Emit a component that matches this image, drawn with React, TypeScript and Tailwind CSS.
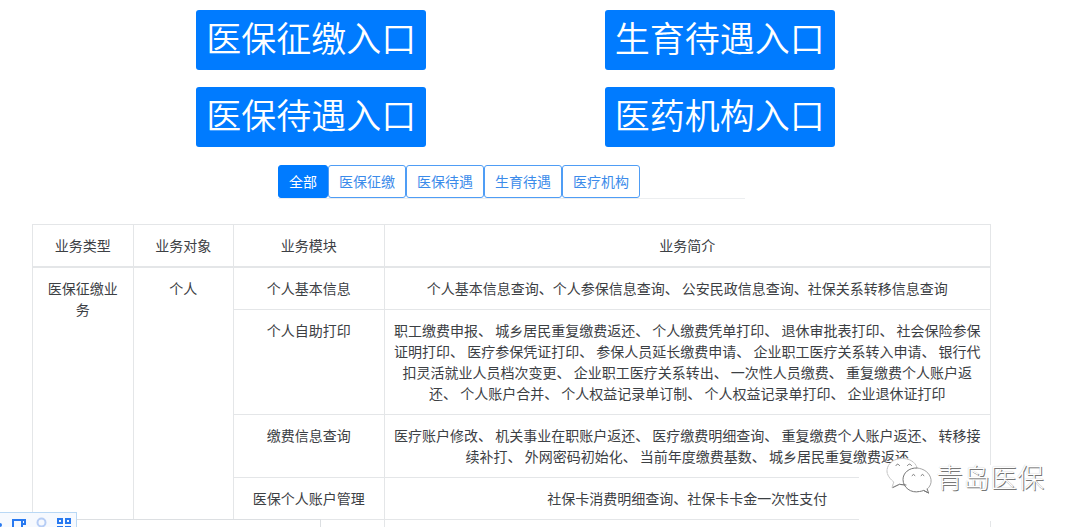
import { useState } from "react";

const entries = ["医保征缴入口", "生育待遇入口", "医保待遇入口", "医药机构入口"];
const tabs = ["全部", "医保征缴", "医保待遇", "生育待遇", "医疗机构"];

const rows = [
  {
    name: "个人基本信息",
    lines: ["个人基本信息查询、个人参保信息查询、 公安民政信息查询、社保关系转移信息查询"],
  },
  {
    name: "个人自助打印",
    lines: [
      "职工缴费申报、 城乡居民重复缴费返还、 个人缴费凭单打印、 退休审批表打印、 社会保险参保",
      "证明打印、 医疗参保凭证打印、 参保人员延长缴费申请、 企业职工医疗关系转入申请、 银行代",
      "扣灵活就业人员档次变更、 企业职工医疗关系转出、 一次性人员缴费、 重复缴费个人账户返",
      "还、 个人账户合并、 个人权益记录单订制、 个人权益记录单打印、 企业退休证打印",
    ],
  },
  {
    name: "缴费信息查询",
    lines: [
      "医疗账户修改、 机关事业在职账户返还、 医疗缴费明细查询、 重复缴费个人账户返还、 转移接",
      "续补打、 外网密码初始化、 当前年度缴费基数、 城乡居民重复缴费返还",
    ],
  },
  { name: "医保个人账户管理", lines: ["社保卡消费明细查询、社保卡卡金一次性支付"] },
];

const cell = "border border-[#e4e6e8] px-2 py-[10px] text-center align-top font-normal";

function Watermark() {
  return (
    <div className="absolute top-[465px] right-[31px] flex h-14 w-[190px] items-start bg-white">
      <svg
        className="-mt-2 ml-[26px] h-10 w-[48px] shrink-0"
        viewBox="0 0 48 40"
        fill="none"
        strokeLinecap="round"
      >
        <path
          d="M21 28c-2.500.3-4.500 0-6.500-.8L7 30.500l1.800-5.500C5 22 2 18 2 14 2 7 8.500 1.500 17 1.500S31 6 32 11"
          fill="#fff"
          stroke="#c4c4c4"
          strokeDasharray="3 1"
        />
        <path d="M32 11c-8-.5-14 5-14 11.500 0 8 8 14 16.500 12 1.800-.2 3-.6 4-1l5 2.500-1.300-4" fill="#fff" stroke="#777" />
        <path d="M42.200 32c3-2.500 4.300-5.500 3.800-9.500C45 16 39 11.500 32 11" fill="#fff" stroke="#a5a5a5" />
        <path d="M8 30.500l6.500-3.200L21 28M39 33.500l4.500 2.500" stroke="#777" />
        <path d="M11 8.500q1.500-3 3.500 0M22.500 8.500q2-3 4 0M27 18.500q1.500-2.500 3 0M36 18.500q1.500-2.500 3 0" stroke="#777" />
      </svg>
      <span className="-mt-[6px] ml-[3px] text-[27px] leading-[36px] font-light whitespace-nowrap text-white [text-shadow:1px_1px_0_#777,0_0_1px_#bbb]">
        青岛医保
      </span>
    </div>
  );
}

function Toolbar() {
  return (
    <div className="absolute bottom-0 left-0 h-[15px] w-[77px] overflow-hidden border-t border-r border-[#b9d8f5] bg-[#f6f9fe]">
      <svg className="h-[15px] w-[76px]" viewBox="0 0 76 15" fill="none">
        <circle cx="0" cy="12" r="2" fill="#2879f0" />
        <path d="M13 16V7h9v9M22 7h3v4h-3" stroke="#2879f0" strokeWidth="2" />
        <circle cx="41.500" cy="9.500" r="4" stroke="#b6cdf5" strokeWidth="2" />
        <path d="M39 15h5" stroke="#b6cdf5" strokeWidth="2" />
        <path d="M58 6h4v4h-4zM66 6h4v4h-4zM57 14h6M65 14h6" stroke="#2879f0" strokeWidth="2" />
      </svg>
    </div>
  );
}

export default function App() {
  const [active, setActive] = useState("全部");
  return (
    <main className="relative h-screen overflow-hidden bg-white pr-[89px] pl-8 font-['Noto_Sans_CJK_SC',sans-serif] text-[14px] leading-[21px] text-[#3c4044]">
      <div className="mx-auto grid w-[86%] grid-cols-2 justify-items-center gap-y-[17px] pt-[10px] pl-2">
        {entries.map((label) => (
          <button
            key={label}
            className="h-[60px] rounded-[3px] bg-[#007bff] px-[10px] pb-[6px] text-[35px] leading-[50px] font-[350] text-white"
          >
            {label}
          </button>
        ))}
      </div>

      <nav className="mx-auto mt-[18px] flex w-[467px] border-b border-[#eceef0]">
        {tabs.map((label) => (
          <button
            key={label}
            onClick={() => setActive(label)}
            className={
              active === label
                ? "h-[33px] rounded-[3px] border border-[#007bff] bg-[#007bff] px-[10px] pb-px text-white"
                : "h-[33px] rounded-[3px] border border-[#4f9df5] bg-white px-[10px] pb-px text-[#3b8bea]"
            }
          >
            {label}
          </button>
        ))}
      </nav>

      <table className="mt-[25px] w-full table-fixed border-collapse">
        <colgroup>
          <col className="w-[10.5%]" />
          <col className="w-[10.5%]" />
          <col className="w-[15.7%]" />
          <col />
        </colgroup>
        <thead>
          <tr className="border-b-2 border-[#e4e6e8]">
            {["业务类型", "业务对象", "业务模块", "业务简介"].map((h) => (
              <th key={h} className={cell}>
                {h}
              </th>
            ))}
          </tr>
        </thead>
        <tbody>
          {rows.map((row, i) => (
            <tr key={row.name}>
              {i === 0 && (
                <>
                  <td rowSpan={4} className={cell}>
                    医保征缴业
                    <br />务
                  </td>
                  <td rowSpan={4} className={cell}>
                    个人
                  </td>
                </>
              )}
              <td className={cell}>{row.name}</td>
              <td className={cell}>
                {row.lines.map((line) => (
                  <span key={line} className="block">
                    {line}
                  </span>
                ))}
              </td>
            </tr>
          ))}
          <tr className="h-10">
            <td className={cell} />
            <td className={cell} />
            <td className={cell} />
            <td className={cell} />
          </tr>
        </tbody>
      </table>

      <div className="absolute bottom-0 left-0 h-2 w-[321px] border-t border-r border-[#dcdfe2] bg-white" />
      <Toolbar />
      <Watermark />
    </main>
  );
}
